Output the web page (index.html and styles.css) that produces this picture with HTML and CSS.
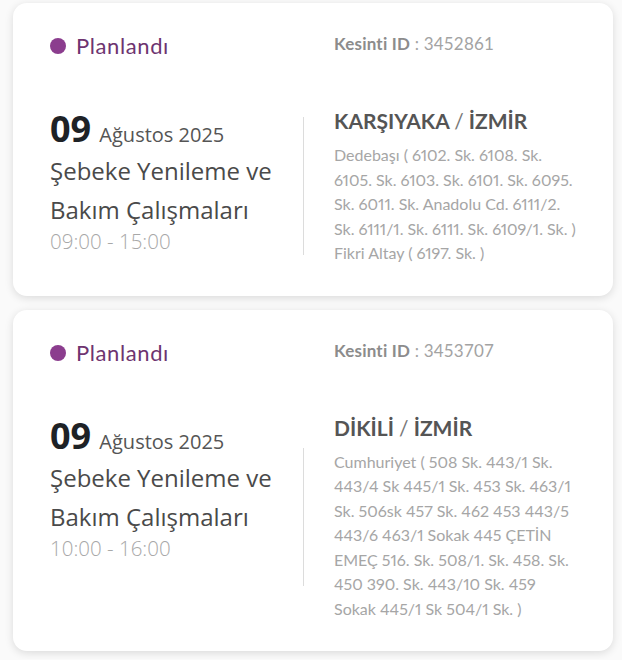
FILE: index.html
```html
<!DOCTYPE html>
<html lang="tr">
<head>
  <meta charset="UTF-8" />
  <meta name="viewport" content="width=device-width, initial-scale=1.0"/>
  <title>Planlı Kesintiler</title>
  <link rel="stylesheet" href="styles.css">
</head>
<body>
  <div class="outage-list">

    <div class="outage-card">
      <div class="status"><span class="dot"></span>Planlandı</div>
      <div class="outage-id"><b>Kesinti ID</b> : 3452861</div>

      <div class="when">
        <div class="date"><span class="day">09</span> Ağustos 2025</div>
        <div class="title">Şebeke Yenileme ve Bakım Çalışmaları</div>
        <div class="hours">09:00 - 15:00</div>
      </div>
      <div class="divider"></div>
      <div class="where">
        <h3>KARŞIYAKA <span>/</span> İZMİR</h3>
        <p>Dedebaşı ( 6102. Sk. 6108. Sk. 6105. Sk. 6103. Sk. 6101. Sk. 6095. Sk. 6011. Sk. Anadolu Cd. 6111/2. Sk. 6111/1. Sk. 6111. Sk. 6109/1. Sk. ) Fikri Altay ( 6197. Sk. )</p>
      </div>
    </div>

    <div class="outage-card">
      <div class="status"><span class="dot"></span>Planlandı</div>
      <div class="outage-id"><b>Kesinti ID</b> : 3453707</div>

      <div class="when">
        <div class="date"><span class="day">09</span> Ağustos 2025</div>
        <div class="title">Şebeke Yenileme ve Bakım Çalışmaları</div>
        <div class="hours">10:00 - 16:00</div>
      </div>
      <div class="divider"></div>
      <div class="where">
        <h3>DİKİLİ <span>/</span> İZMİR</h3>
        <p>Cumhuriyet ( 508 Sk. 443/1 Sk. 443/4 Sk 445/1 Sk. 453 Sk. 463/1 Sk. 506sk 457 Sk. 462 453 443/5 443/6 463/1 Sokak 445 ÇETİN EMEÇ 516. Sk. 508/1. Sk. 458. Sk. 450 390. Sk. 443/10 Sk. 459 Sokak 445/1 Sk 504/1 Sk. )</p>
      </div>
    </div>

  </div>
</body>
</html>
```

FILE: styles.css
```css
body {
  margin: 0;
  padding: 3px 9px 8px 13px;
  background: #fafafa;
  font-family: 'Open Sans', sans-serif;
}

.outage-list {
  display: flex;
  flex-direction: column;
  gap: 14px;
  width: 600px;
}

.outage-card {
  display: grid;
  grid-template-columns: 253px 1px 1fr;
  row-gap: 47px;
  padding: 29px 35px 30px 37px;
  background: #fff;
  border-radius: 14px;
  box-shadow: 0 2px 8px rgba(0,0,0,0.13);
}

/* top row */
.status {
  display: flex;
  align-items: center;
  gap: 10px;
  font-family: 'Lato', sans-serif;
  font-size: 22px;
  letter-spacing: 0.6px;
  line-height: 28px;
  color: #6e3470;
}
.dot {
  width: 16px;
  height: 16px;
  border-radius: 50%;
  background: #8b3d8e;
}
.outage-id {
  grid-column: 3;
  padding-left: 30px;
  font-family: 'Lato', sans-serif;
  font-size: 17px;
  letter-spacing: 0.2px;
  line-height: 24px;
  color: #a3a3a3;
}
.outage-id b {
  color: #8c8c8c;
}

/* left column */
.date {
  height: 44px;
  line-height: 44px;
  font-size: 20px;
  color: #555;
}
.day {
  margin-right: 3px;
  font-size: 36px;
  font-weight: bold;
  color: #1e2226;
}
.title {
  font-size: 24px;
  line-height: 39px;
  color: #4a4a4a;
}
.hours {
  font-size: 20.5px;
  font-weight: 300;
  line-height: 24px;
  color: #a8a8a8;
}

.divider {
  align-self: center;
  height: 138px;
  background: #dcdcdc;
}

/* right column */
.where {
  padding-left: 30px;
  font-family: 'Lato', sans-serif;
}
.where h3 {
  margin: 0;
  font-size: 21px;
  line-height: 28px;
  color: #555;
}
.where h3 span {
  font-weight: normal;
  color: #777;
}
.where p {
  margin: 8px 0 0;
  font-size: 16px;
  font-variant-numeric: proportional-nums;
  line-height: 24.5px;
  color: #a6a6a6;
}
```
